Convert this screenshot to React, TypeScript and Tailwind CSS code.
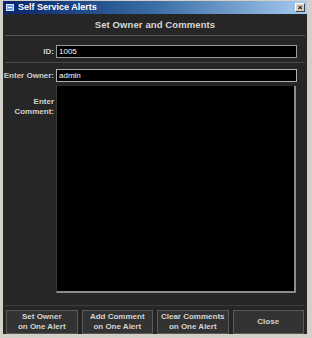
import React from "react";

export default function App() {
  const font = { fontFamily: '"Liberation Sans", Arial, sans-serif' };
  return (
    <div className="w-[312px] h-[338px] bg-[#d4d0c8] flex flex-col pl-[3px] pr-[5px] pb-[4px] pt-[1px]" style={font}>
      {/* title bar */}
      <div className="h-[13px] flex items-center bg-gradient-to-r from-[#0a246a] via-[#3a6ea5] to-[#a6caf0] pl-[3px] pr-[2px] shrink-0">
        <div className="w-[8px] h-[7px] bg-[#6fa0e8] border border-[#dce8ff] mr-[4px] flex items-center justify-center">
          <div className="w-[4px] h-[1px] bg-white" />
        </div>
        <span className="text-[9px] font-bold text-white leading-none">Self Service Alerts</span>
        <div className="ml-auto w-[10px] h-[9px] bg-[#d4d0c8] border border-t-white border-l-white border-r-[#404040] border-b-[#404040] flex items-center justify-center text-[8px] leading-none text-black font-bold">
          ×
        </div>
      </div>
      {/* body */}
      <div className="flex-1 bg-[#262626] flex flex-col">
        <div className="h-[20px] flex items-center justify-center mt-[1px]">
          <span className="text-[9.5px] font-bold text-[#d8d8d8] tracking-[0.1px]">Set Owner and Comments</span>
        </div>
        <div className="h-px bg-[#555] mx-[2px]" />
        <div className="flex items-center mt-[9px] pr-[10px]">
          <div className="w-[53px] text-right text-[8px] font-bold text-[#d0d0d0] pr-[2px]">ID:</div>
          <div className="flex-1 h-[13px] bg-black border border-[#9a9a9a] flex items-center px-[2px]">
            <span className="text-[8px] text-white leading-none">1005</span>
          </div>
        </div>
        <div className="h-px bg-[#4a4a4a] mx-[2px] mt-[4px]" />
        <div className="flex items-center mt-[6px] pr-[10px]">
          <div className="w-[53px] text-right text-[8px] font-bold text-[#d0d0d0] pr-[2px] whitespace-nowrap">Enter Owner:</div>
          <div className="flex-1 h-[13px] bg-black border border-[#b0b0b0] flex items-center px-[2px]">
            <span className="text-[8px] text-white leading-none">admin</span>
          </div>
        </div>
        <div className="flex mt-[4px] pr-[11px]">
          <div className="w-[53px] text-right text-[8px] font-bold text-[#d0d0d0] pr-[2px] pt-[11px] leading-[10px]">
            Enter<br />Comment:
          </div>
          <div className="flex-1 h-[207px] bg-black border-l border-[#3a3a3a] border-r-2 border-b-2 border-r-[#8c8c8c] border-b-[#8c8c8c]" />
        </div>
        <div className="h-px bg-[#3c3c3c] mx-[2px] mt-[12px]" />
        <div className="flex gap-[4px] px-[3px] mt-[4px]">
          {[
            ["Set Owner", "on One Alert"],
            ["Add Comment", "on One Alert"],
            ["Clear Comments", "on One Alert"],
            ["Close"],
          ].map((lines, i) => (
            <div
              key={i}
              className="flex-1 h-[24px] border border-[#5a5a5a] bg-[#333333] flex flex-col items-center justify-center text-[8px] font-bold text-[#d4d4d4] leading-[10px]"
            >
              {lines.map((l, j) => (
                <span key={j}>{l}</span>
              ))}
            </div>
          ))}
        </div>
      </div>
    </div>
  );
}
